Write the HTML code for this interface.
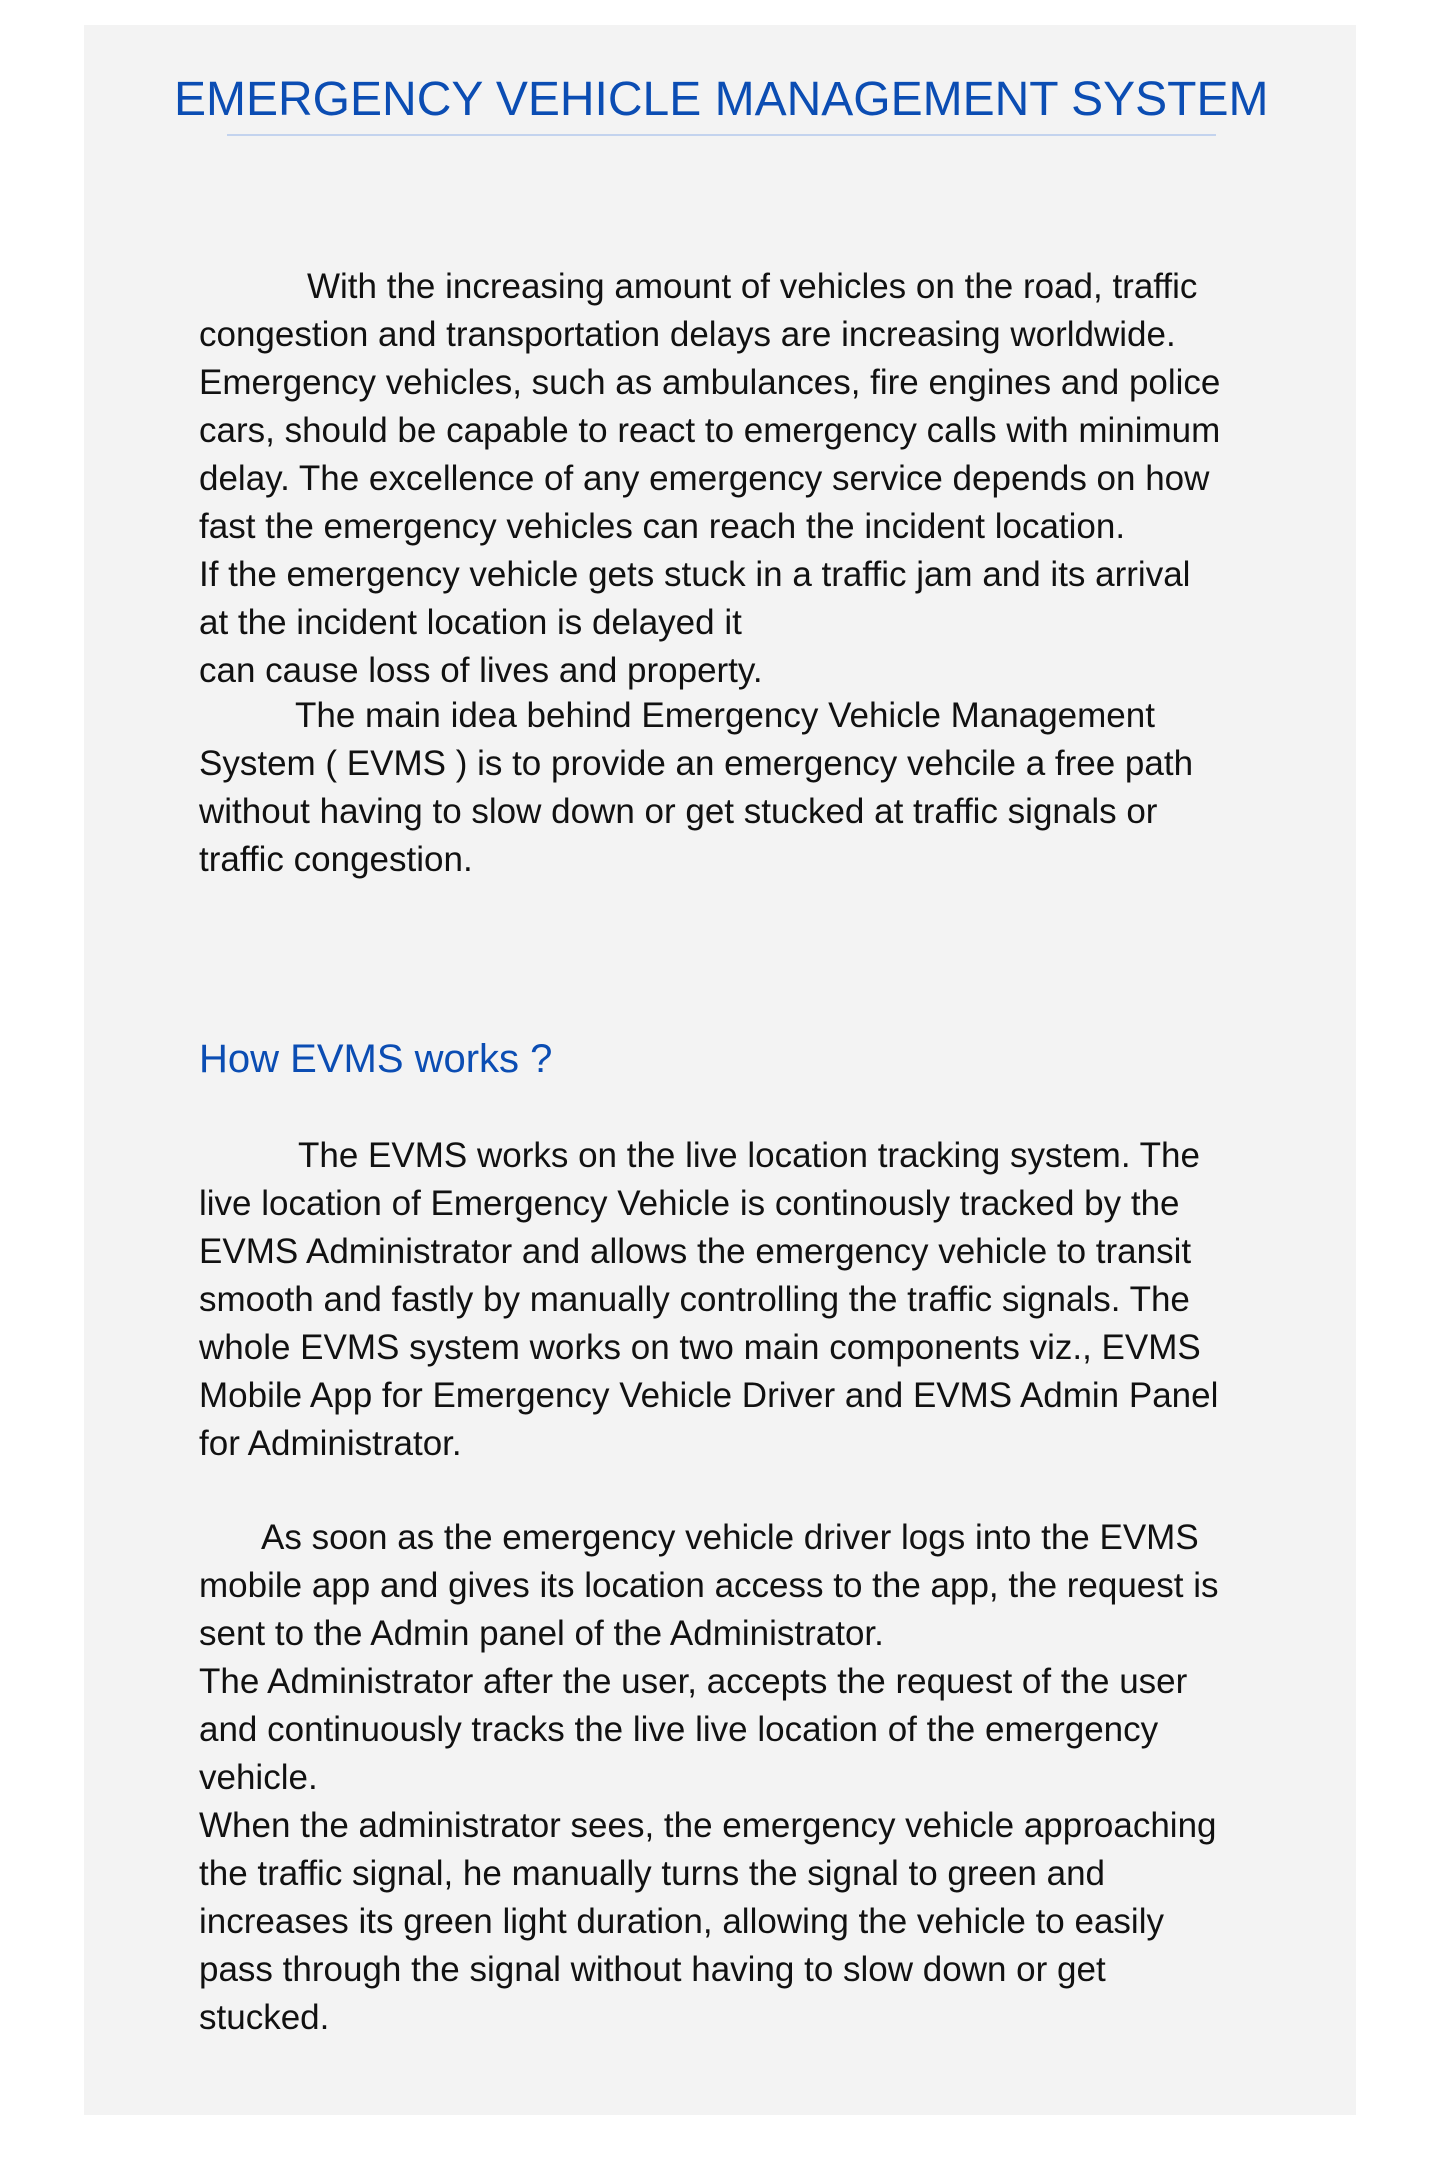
<!DOCTYPE html>
<html><head><meta charset="utf-8"><style>
html,body{margin:0;padding:0;background:#fff;}
body{width:1440px;height:2171px;position:relative;overflow:hidden;font-family:"Liberation Sans",sans-serif;}
.panel{position:absolute;left:84px;top:25px;width:1272px;height:2090px;background:#f3f3f3;}
.title{position:absolute;left:174px;top:76px;font-size:48px;line-height:48px;color:#0b4db3;white-space:nowrap;}
.rule{position:absolute;left:227px;top:134px;width:989px;height:2px;background:#c3d3ee;}
.p{position:absolute;left:199px;font-size:35px;line-height:48px;color:#111;white-space:nowrap;}
.h{position:absolute;left:199px;top:1039px;font-size:40px;line-height:40px;color:#0b4db3;white-space:nowrap;}
</style></head><body>
<div class="panel"></div>
<div class="title">EMERGENCY VEHICLE MANAGEMENT SYSTEM</div>
<div class="rule"></div>
<div class="p" style="top:263px">
<div style="padding-left:108px">With the increasing amount of vehicles on the road, traffic</div>
<div>congestion and transportation delays are increasing worldwide.</div>
<div>Emergency vehicles, such as ambulances, fire engines and police</div>
<div>cars, should be capable to react to emergency calls with minimum</div>
<div>delay. The excellence of any emergency service depends on how</div>
<div>fast the emergency vehicles can reach the incident location.</div>
<div>If the emergency vehicle gets stuck in a traffic jam and its arrival</div>
<div>at the incident location is delayed it</div>
<div>can cause loss of lives and property.</div>
</div>
<div class="p" style="top:692px">
<div style="padding-left:96px">The main idea behind Emergency Vehicle Management</div>
<div>System ( EVMS ) is to provide an emergency vehcile a free path</div>
<div>without having to slow down or get stucked at traffic signals or</div>
<div>traffic congestion.</div>
</div>
<div class="h">How EVMS works ?</div>
<div class="p" style="top:1132px">
<div style="padding-left:99px">The EVMS works on the live location tracking system. The</div>
<div>live location of Emergency Vehicle is continously tracked by the</div>
<div>EVMS Administrator and allows the emergency vehicle to transit</div>
<div>smooth and fastly by manually controlling the traffic signals. The</div>
<div>whole EVMS system works on two main components viz., EVMS</div>
<div>Mobile App for Emergency Vehicle Driver and EVMS Admin Panel</div>
<div>for Administrator.</div>
</div>
<div class="p" style="top:1514px">
<div style="padding-left:62px">As soon as the emergency vehicle driver logs into the EVMS</div>
<div>mobile app and gives its location access to the app, the request is</div>
<div>sent to the Admin panel of the Administrator.</div>
<div>The Administrator after the user, accepts the request of the user</div>
<div>and continuously tracks the live live location of the emergency</div>
<div>vehicle.</div>
<div>When the administrator sees, the emergency vehicle approaching</div>
<div>the traffic signal, he manually turns the signal to green and</div>
<div>increases its green light duration, allowing the vehicle to easily</div>
<div>pass through the signal without having to slow down or get</div>
<div>stucked.</div>
</div>
</body></html>
